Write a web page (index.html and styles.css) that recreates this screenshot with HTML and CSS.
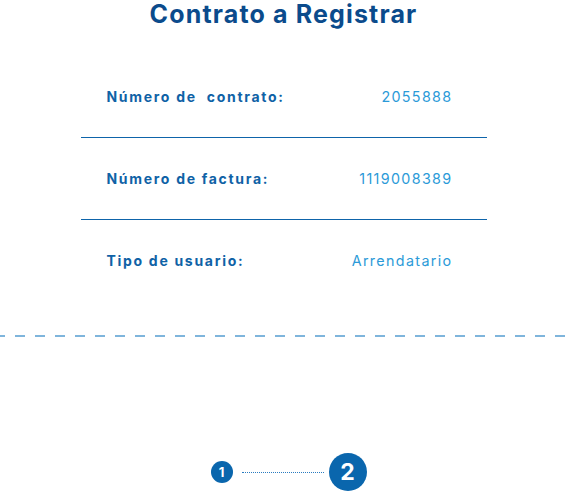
FILE: index.html
```html
<!DOCTYPE html>
<html lang="es">
<head>
<meta charset="utf-8">
<title>Contrato a Registrar</title>
<link rel="stylesheet" href="styles.css">
</head>
<body>
<main class="page">
  <h1 class="title">Contrato a Registrar</h1>
  <section class="details">
    <div class="row">
      <span class="label">Número de&nbsp; contrato:</span>
      <span class="value">2055888</span>
    </div>
    <div class="row">
      <span class="label">Número de factura:</span>
      <span class="value">1119008389</span>
    </div>
    <div class="row">
      <span class="label">Tipo de usuario:</span>
      <span class="value">Arrendatario</span>
    </div>
  </section>
  <div class="dashed"></div>
  <nav class="steps">
    <span class="step step-small">1</span>
    <span class="connector"></span>
    <span class="step step-big">2</span>
  </nav>
</main>
</body>
</html>
```
FILE: styles.css
```css
* { box-sizing: border-box; }
html, body { margin: 0; padding: 0; background: #fff; }
body { font-family: "Inter", "Lato", sans-serif; }
.page {
  width: 567px;
  height: 491px;
  display: flex;
  flex-direction: column;
  align-items: center;
  overflow: hidden;
}
.title {
  margin: 0;
  height: 28px;
  line-height: 28px;
  font-size: 25px;
  font-weight: 700;
  color: #0b4b8c;
  letter-spacing: 1.15px;
}
.details {
  width: 406px;
  margin-top: 28px;
  display: flex;
  flex-direction: column;
}
.row {
  height: 82px;
  display: flex;
  justify-content: space-between;
  align-items: center;
  padding: 0 35px 0 26px;
  border-bottom: 1px solid #0e64aa;
}
.row:last-child { border-bottom: none; height: 81px; }
.label {
  font-size: 14px;
  font-weight: 700;
  color: #0f62a6;
  letter-spacing: 1.7px;
  white-space: pre;
}
.value {
  font-size: 14.3px;
  font-weight: 400;
  color: #2b9ad8;
  letter-spacing: 1.35px;
  margin-right: -1px;
}
.dashed {
  width: 567px;
  height: 2px;
  margin-top: 34px;
  background: repeating-linear-gradient(90deg, #7fb5dc 0 5px, transparent 5px 15px, #7fb5dc 15px 20px);
}
.steps {
  margin-top: 116px;
  display: flex;
  align-items: center;
  margin-left: 10px;
}
.step {
  display: flex;
  align-items: center;
  justify-content: center;
  border-radius: 50%;
  background: #0a66ad;
  color: #fff;
  font-weight: 700;
}
.step-small { width: 22px; height: 22px; font-size: 13px; }
.step-big { width: 38px; height: 38px; font-size: 23px; }
.connector {
  width: 82px;
  margin: 0 5px 0 9px;
  border-top: 1px dotted #2a7cc0;
}
```
